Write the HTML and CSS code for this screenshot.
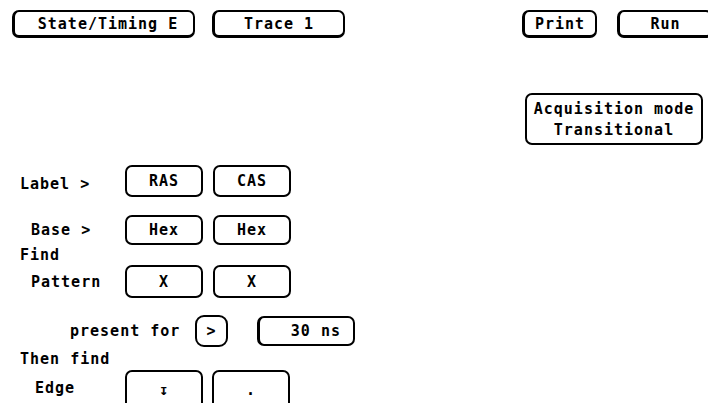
FILE: index.html
```html
<!DOCTYPE html>
<html lang="en">
<head>
  <meta charset="UTF-8" />
  <link rel="stylesheet" href="styles.css">
</head>
<body>

  <div class="top-row">
    <div class="key key-top state-key">State/Timing E</div>
    <div class="key key-top trace-key">Trace 1</div>
    <div class="key key-top print-key">Print</div>
    <div class="key key-top run-key">Run</div>
  </div>

  <div class="key acq-key">
    <span>Acquisition mode</span>
    <span>Transitional</span>
  </div>

  <!-- trigger setup -->
  <div class="setup">
    <div class="row label-row">
      <div class="row-name">Label &gt;</div>
      <div class="key field">RAS</div>
      <div class="key field">CAS</div>
    </div>

    <div class="row base-row">
      <div class="row-name indent">Base &gt;</div>
      <div class="key field">Hex</div>
      <div class="key field">Hex</div>
    </div>

    <div class="heading find-heading">Find</div>

    <div class="row pattern-row">
      <div class="row-name indent">Pattern</div>
      <div class="key field">X</div>
      <div class="key field">X</div>
    </div>

    <div class="row present-row">
      <div class="present-name">present for</div>
      <div class="key small-key">&gt;</div>
      <div class="key time-key">30 ns</div>
    </div>

    <div class="heading then-heading">Then find</div>

    <div class="row edge-row">
      <div class="row-name edge-indent">Edge</div>
      <div class="key field">&#8615;</div>
      <div class="key field">.</div>
    </div>
  </div>

</body>
</html>
```

FILE: styles.css
```css
body {
  margin: 0;
  padding: 0;
  width: 708px;
  height: 403px;
  overflow: hidden;
  background-color: #fff;
  color: #000;
  font-family: 'DejaVu Sans Mono', 'Liberation Mono', monospace;
  font-weight: bold;
  font-size: 15px;
  letter-spacing: 1px;
}

.key {
  box-sizing: border-box;
  border: 2px solid #000;
  border-radius: 7px;
  display: flex;
  align-items: center;
  justify-content: center;
  white-space: nowrap;
  flex-shrink: 0;
}

/* TOP SOFTKEYS */
.top-row {
  display: flex;
  padding: 10px 0 0 12px;
  height: 28px;
}

.key-top {
  height: 28px;
  border-bottom-width: 3px;
  border-left-width: 3px;
}

.state-key {
  width: 183px;
  padding-left: 8px;
}

.trace-key {
  width: 133px;
  margin-left: 17px;
}

.print-key {
  width: 75px;
  margin-left: 177px;
}

.run-key {
  width: 96px;
  margin-left: 20px;
}

.acq-key {
  flex-direction: column;
  width: 178px;
  height: 52px;
  margin: 55px 0 0 525px;
  gap: 3px;
}

/* TRIGGER SETUP */
.setup {
  margin-top: 20px;
}

.row {
  display: flex;
  align-items: center;
}

.row-name {
  width: 105px;
  padding-left: 20px;
}

.label-row .row-name {
  padding-top: 6px;
}

.row-name.indent {
  width: 94px;
  padding-left: 31px;
}

.row-name.edge-indent {
  width: 90px;
  padding-left: 35px;
}

.field {
  width: 78px;
  margin-right: 10px;
}

.label-row .field {
  height: 32px;
}

.base-row {
  margin-top: 18px;
}

.base-row .field {
  height: 30px;
}

.heading {
  padding-left: 20px;
  height: 20px;
  line-height: 20px;
}

.pattern-row .field {
  height: 33px;
}

.present-row {
  margin-top: 17px;
}

.present-name {
  padding-left: 70px;
  width: 125px;
}

.small-key {
  width: 33px;
  height: 32px;
  border-radius: 9px;
}

.time-key {
  width: 98px;
  height: 30px;
  margin-left: 29px;
  justify-content: flex-end;
  padding-right: 12px;
  border-left-width: 3px;
}

.then-heading {
  height: 23px;
  line-height: 24px;
}

.edge-row .field {
  height: 40px;
  margin-right: 9px;
}

.edge-row .row-name {
  padding-bottom: 4px;
}
```
